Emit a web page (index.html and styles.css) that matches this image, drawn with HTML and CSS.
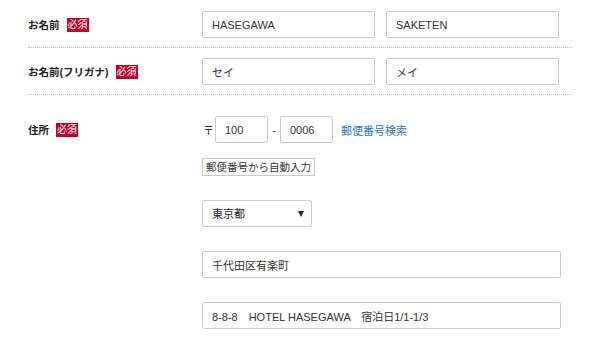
FILE: index.html
```html
<!DOCTYPE html>
<html lang="ja">
<head>
  <meta charset="UTF-8" />
  <meta name="viewport" content="width=device-width, initial-scale=1.0"/>
  <title>ご予約者情報</title>
  <link rel="stylesheet" href="styles.css">
</head>
<body>
  <form class="entry-form">
    <div class="form-row">
      <div class="form-label">お名前<span class="required">必須</span></div>
      <div class="form-field name-pair">
        <input type="text" class="text-input name-input" value="HASEGAWA" />
        <input type="text" class="text-input name-input" value="SAKETEN" />
      </div>
    </div>

    <div class="form-row">
      <div class="form-label">お名前(フリガナ)<span class="required">必須</span></div>
      <div class="form-field name-pair">
        <input type="text" class="text-input name-input" value="セイ" />
        <input type="text" class="text-input name-input" value="メイ" />
      </div>
    </div>

    <div class="form-row address-row">
      <div class="form-label">住所<span class="required">必須</span></div>
      <div class="form-field address-fields">
        <div class="zip-line">
          <span class="zip-mark">〒</span>
          <input type="text" class="text-input zip-input" value="100" />
          <span class="zip-dash">-</span>
          <input type="text" class="text-input zip-input" value="0006" />
          <a href="#" class="zip-search">郵便番号検索</a>
        </div>
        <div>
          <button type="button" class="zip-auto">郵便番号から自動入力</button>
        </div>
        <div class="select-wrap">
          <select class="pref-select">
            <option>東京都</option>
          </select>
        </div>
        <input type="text" class="text-input wide-input" value="千代田区有楽町" />
        <input type="text" class="text-input wide-input" value="8-8-8　HOTEL HASEGAWA　宿泊日1/1-1/3" />
      </div>
    </div>
  </form>
</body>
</html>
```

FILE: styles.css
```css
body {
  margin: 0;
  background: #fff;
  font-family: "Liberation Sans", "Noto Sans CJK JP", sans-serif;
  color: #333;
}
.entry-form {
  width: 544px;
  margin-left: 28px;
}
.form-row {
  display: flex;
  align-items: flex-start;
  padding: 10px 0 9px;
  border-bottom: 1px dotted #bbb;
}
.form-row:first-child {
  padding-top: 11px;
}
.address-row {
  padding-top: 21px;
  border-bottom: none;
}
.form-label {
  display: flex;
  align-items: center;
  gap: 7px;
  width: 174px;
  height: 27px;
  font-size: 10.5px;
  font-weight: bold;
  color: #222;
}
.required {
  background: #c4002a;
  color: #fff;
  font-size: 10px;
  font-weight: normal;
  line-height: 14px;
  padding: 0 1px;
}
.name-pair {
  display: flex;
  gap: 11px;
}
.text-input {
  box-sizing: border-box;
  height: 27px;
  border: 1px solid #c6cbcb;
  border-radius: 2px;
  padding: 0 9px;
  font-family: inherit;
  font-size: 11px;
  color: #333;
  background: #fff;
}
.name-input {
  width: 173px;
}
.address-fields {
  display: flex;
  flex-direction: column;
  align-items: flex-start;
}
.zip-line {
  display: flex;
  align-items: center;
  height: 27px;
  font-size: 11px;
}
.zip-mark {
  width: 13px;
  padding-left: 1px;
  box-sizing: border-box;
}
.zip-input {
  width: 53px;
}
.zip-dash {
  width: 12px;
  text-align: center;
}
.zip-search {
  margin-left: 8px;
  color: #2e78bd;
  text-decoration: none;
}
.zip-auto {
  display: block;
  margin-top: 15px;
  height: 18px;
  padding: 0 3px;
  border: 1px solid #c6cbcb;
  border-radius: 0;
  background: #fff;
  font-family: inherit;
  font-size: 10.5px;
  line-height: 16px;
  color: #333;
}
.select-wrap {
  position: relative;
  margin-top: 24px;
  height: 27px;
}
.select-wrap::after {
  content: "";
  position: absolute;
  right: 8px;
  top: 11px;
  border-left: 3px solid transparent;
  border-right: 3px solid transparent;
  border-top: 6px solid #222;
}
.pref-select {
  display: block;
  appearance: none;
  width: 110px;
  height: 27px;
  border: 1px solid #c6cbcb;
  border-radius: 2px;
  padding: 0 9px;
  background: #fff;
  font-family: inherit;
  font-size: 11px;
  color: #222;
}
.wide-input {
  width: 359px;
  margin-top: 24px;
}
```
